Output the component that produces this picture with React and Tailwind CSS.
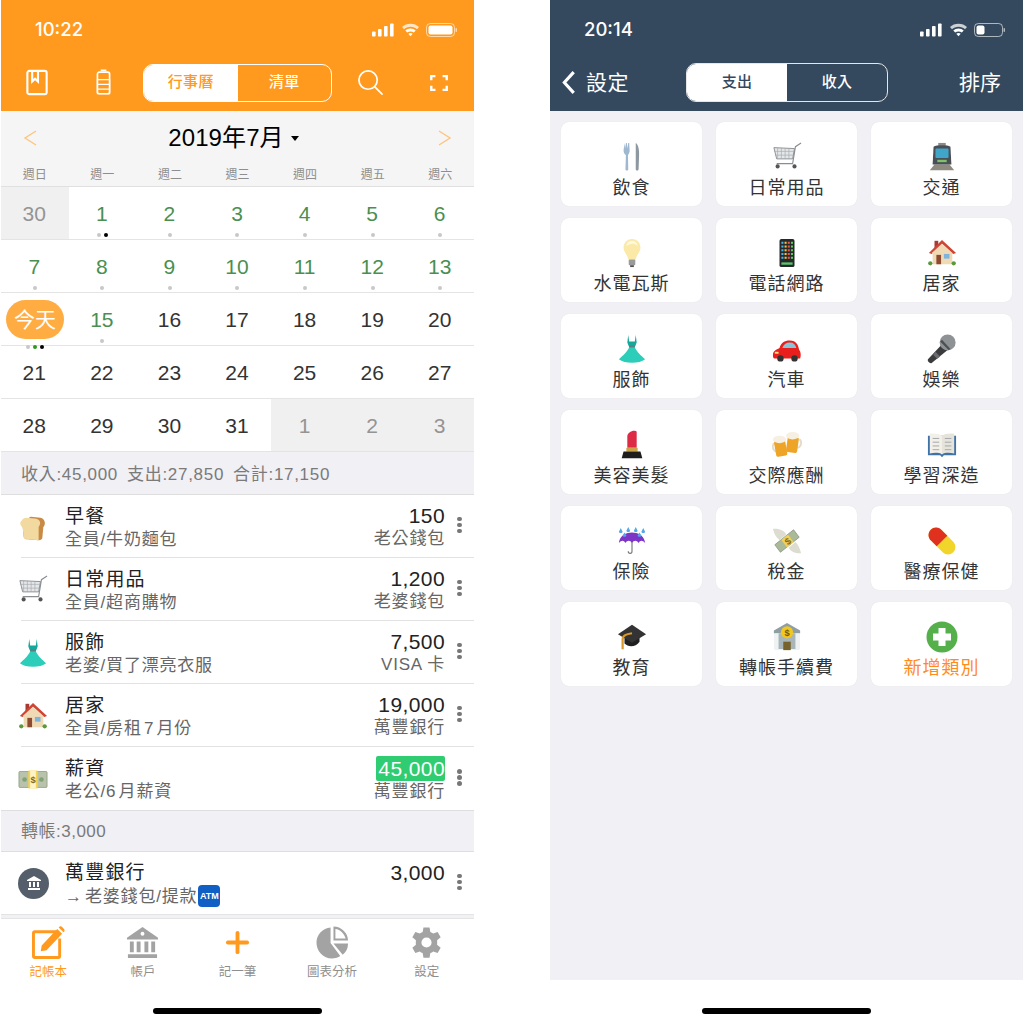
import { Plus } from 'lucide-react'

const FONT = "font-['Liberation_Sans','Noto_Sans_CJK_TC',sans-serif]"

// ---- emoji drawings, there is no emoji font in the sandbox
const Bread = () => (
  <svg viewBox="0 0 32 32" className="w-[30px] h-[30px]">
    <path d="M10 10 C4 9 3 14 5 16 L6 26 C6 28 8 29 10 29 L22 30 C25 30 26 29 26 27 L27 16 C30 13 29 7 24 6 L14 5 C12 5 11 7 10 10Z" fill="#c98a45" />
    <path d="M4 9 C1 12 3 15 5 16 L6 26 C6 28 8 29 11 29 L22 30 L22 16 C26 11 22 7 18 7 L9 6 C7 6 5 7 4 9Z" fill="#f2d9a0" />
  </svg>
)
const Cart = ({ size = 'w-[30px] h-[30px]' }) => (
  <svg viewBox="0 0 32 32" className={size} fill="none">
    <path d="M2 6 L24 7 L22 18 L5 18Z" fill="#e4e6e8" stroke="#8a8e92" strokeWidth="1" />
    <path d="M6 6 V18 M10 6 V18 M14 7 V18 M18 7 V18 M2 10 H24 M3 14 H23" stroke="#a6aaae" strokeWidth="0.7" />
    <path d="M31 1 L25 5 L22 23 H5" stroke="#8a8e92" strokeWidth="1.2" />
    <circle cx="6" cy="26" r="2.2" fill="#555" />
    <circle cx="24" cy="26" r="2.2" fill="#555" />
  </svg>
)
const Dress = () => (
  <svg viewBox="0 0 32 32" className="w-[30px] h-[30px]">
    <path d="M12 1 L13 8 H19 L20 1 L21 9 L19 14 H13 L11 9Z" fill="#16a89a" />
    <path d="M13 14 H19 C21 19 26 23 30 27 C24 32 8 32 2 27 C6 23 11 19 13 14Z" fill="#2ccdb9" />
    <rect x="13" y="12.5" width="6" height="2" fill="#5e7d80" />
  </svg>
)
const House = () => (
  <svg viewBox="0 0 32 32" className="w-[30px] h-[30px]">
    <rect x="8" y="3" width="4" height="8" fill="#a83a32" />
    <rect x="6" y="14" width="21" height="14" fill="#f0d9b5" />
    <path d="M16 2 L31 16 L28 17 L16 6 L5 17 L2 16Z" fill="#cf4535" />
    <path d="M16 6 L27 16 H5Z" fill="#f0d9b5" />
    <rect x="10" y="18" width="5" height="10" fill="#8c4a30" />
    <rect x="18" y="17" width="6" height="5" fill="#7fb5dc" />
    <circle cx="3.5" cy="27" r="2.3" fill="#5b9a3c" />
    <circle cx="28.5" cy="27" r="2.3" fill="#5b9a3c" />
  </svg>
)
const Money = () => (
  <svg viewBox="0 0 32 32" className="w-[30px] h-[30px]">
    <rect x="1" y="8" width="30" height="17" rx="1" fill="#b9c2aa" stroke="#8c9880" strokeWidth="0.8" />
    <circle cx="7" cy="16.5" r="2.5" fill="#83a176" />
    <circle cx="25" cy="16.5" r="2.5" fill="#83a176" />
    <rect x="11" y="7" width="10" height="19" fill="#f6d34f" />
    <rect x="13" y="7" width="6" height="19" fill="#fdf3c8" />
    <text x="16" y="20" textAnchor="middle" fontSize="10" fontWeight="700" fill="#7b6a2a" fontFamily="Liberation Sans">$</text>
  </svg>
)
const Cutlery = () => (
  <svg viewBox="0 0 32 32" className="w-[30px] h-[30px]">
    <path d="M8 1 L8.6 7 L9.6 1 L10.5 1 L11 7 L12 1 L13 1 L13.5 9 C13.5 12 12 13 11.7 14 L12 29 C12 31 9 31 9 29 L9.5 14 C8.5 13 7 12 7 9Z" fill="#9fb8cf" />
    <path d="M20 1 C23 3 24 9 23.5 16 L23 29 C23 31 20 31 20 29Z" fill="#8d98a0" />
  </svg>
)
const Train = () => (
  <svg viewBox="0 0 32 32" className="w-[30px] h-[30px]">
    <path d="M3 30 L8 24 H24 L29 30Z" fill="#8e8a80" />
    <rect x="12" y="1" width="8" height="3" fill="#8a8a8a" />
    <path d="M7 5 C10 3 22 3 25 5 L26 24 H6Z" fill="#4a4f55" />
    <rect x="9" y="7" width="14" height="10" rx="1" fill="#3fa6c9" />
    <rect x="11" y="19" width="10" height="2.5" fill="#7dc26a" />
  </svg>
)
const Bulb = () => (
  <svg viewBox="0 0 32 32" className="w-[30px] h-[30px]">
    <path d="M16 1 C9 1 7 7 7 10 C7 15 11 17 12 23 H20 C21 17 25 15 25 10 C25 7 23 1 16 1Z" fill="#fbe9a8" />
    <path d="M16 3 C12 3 10 6 10 9 C14 5 20 5 22 9 C22 6 20 3 16 3Z" fill="#fff8dc" />
    <rect x="12.5" y="23" width="7" height="6" rx="1" fill="#9a9a9a" />
    <rect x="14" y="29" width="4" height="2" fill="#555" />
  </svg>
)
const Phone = () => (
  <svg viewBox="0 0 32 32" className="w-[30px] h-[30px]">
    <rect x="8" y="1" width="16" height="30" rx="2" fill="#26282b" />
    {[4, 8, 12, 16, 20].map((y) =>
      [10, 13.4, 16.8, 20.2].map((x, i) => (
        <rect key={`${x}-${y}`} x={x} y={y} width="2.2" height="2.2" fill={['#3fb5e8', '#f2c33c', '#e8574f', '#5fc95a'][(i + y) % 4]} />
      ))
    )}
    <rect x="10" y="26" width="12" height="2.5" fill="#59c46a" />
  </svg>
)
const Car = () => (
  <svg viewBox="0 0 32 32" className="w-[30px] h-[30px]">
    <path d="M1 22 C1 18 6 16 8 15 C10 9 13 7 19 7 C26 7 28 12 29 17 C31 19 31 24 30 26 H3 C1 26 1 24 1 22Z" fill="#e81f1c" />
    <path d="M11 15 C12 11 15 9 19 9 C23 9 25 11 26 15Z" fill="#86c5da" />
    <circle cx="9" cy="26" r="3.4" fill="#333" />
    <circle cx="24" cy="26" r="3.4" fill="#333" />
    <rect x="3" y="19" width="4" height="2" fill="#fbe27a" />
  </svg>
)
const Mic = () => (
  <svg viewBox="0 0 32 32" className="w-[30px] h-[30px]">
    <path d="M16 11 L22 17 L5 31 C3 32 0 29 1 27Z" fill="#3b3b3d" />
    <path d="M9 19 L14 24 L11 26.500 L6.500 22Z" fill="#6a6c70" />
    <circle cx="22" cy="9" r="8.500" fill="#8f9295" />
    <path d="M14 8 L23 17 L25 16 L16 6Z" fill="#4d4f52" />
  </svg>
)
const Lipstick = () => (
  <svg viewBox="0 0 32 32" className="w-[30px] h-[30px]">
    <path d="M11 19 V7 C11 3 16 0 20 1 C21 1 21 2 21 3 V19Z" fill="#dd2b46" />
    <rect x="10" y="19" width="12" height="4" fill="#c9a24a" />
    <path d="M7 23 H25 L27 30 H5Z" fill="#1d1d1d" />
  </svg>
)
const Beer = () => (
  <svg viewBox="0 0 32 32" className="w-[30px] h-[30px]">
    <path d="M3 14 C0 15 0 22 5 23 M29 10 C32 11 32 18 27 19" stroke="#e4dccb" strokeWidth="2" fill="none" />
    <rect x="3" y="11" width="12" height="17" rx="2" transform="rotate(-10 9 18)" fill="#eea527" />
    <rect x="16" y="7" width="12" height="17" rx="2" transform="rotate(8 22 14)" fill="#eea527" />
    <ellipse cx="8" cy="10" rx="7" ry="4" fill="#f6efe2" />
    <ellipse cx="22" cy="6" rx="7" ry="4" fill="#f6efe2" />
  </svg>
)
const Book = () => (
  <svg viewBox="0 0 32 32" className="w-[30px] h-[30px]">
    <path d="M1 6 H31 V27 H18 L16 29 L14 27 H1Z" fill="#3f73a8" />
    <path d="M3 4 C8 3 13 4 16 6 V26 C13 24 8 24 3 25Z" fill="#f2f0e8" />
    <path d="M29 4 C24 3 19 4 16 6 V26 C19 24 24 24 29 25Z" fill="#e6e4da" />
    <path d="M6 9 H13 M6 13 H13 M6 17 H13 M6 21 H13 M19 9 H26 M19 13 H26 M19 17 H26 M19 21 H26" stroke="#a0a4a8" strokeWidth="1" />
  </svg>
)
const Umbrella = () => (
  <svg viewBox="0 0 32 32" className="w-[30px] h-[30px]">
    <path d="M2 18 C3 10 10 7 16 7 C22 7 29 10 30 18 C27 15 25 15 23 18 C21 15 18 15 16 18 C14 15 11 15 9 18 C7 15 5 15 2 18Z" fill="#7d35c8" />
    <path d="M16 17 V27 C16 30 12 30 12 27" stroke="#777" strokeWidth="1.2" fill="none" />
    <path d="M4 2 L6 6 C6 8 2 8 2 6Z M12 1 L14 5 C14 7 10 7 10 5Z M20 1 L22 5 C22 7 18 7 18 5Z M28 2 L30 6 C30 8 26 8 26 6Z M8 7 L10 10 C10 12 6 12 6 10Z M24 7 L26 10 C26 12 22 12 22 10Z" fill="#52a9e6" />
  </svg>
)
const FlyingMoney = () => (
  <svg viewBox="0 0 32 32" className="w-[30px] h-[30px]">
    <path d="M1 3 C7 2 14 5 15 9 L8 15 C4 12 2 8 1 3Z M31 29 C25 30 19 27 18 23 L25 17 C28 20 30 24 31 29Z" fill="#dcdcd0" />
    <path d="M3 20 L23 4 L29 12 L9 28Z" fill="#aab998" stroke="#84907a" strokeWidth="0.8" />
    <path d="M10 15 L17 9 L23 17 L16 23Z" fill="#f2cf58" />
    <text x="16.5" y="20" textAnchor="middle" fontSize="10" fontWeight="700" fill="#7b6a2a" fontFamily="Liberation Sans" transform="rotate(-40 16.5 16)">$</text>
  </svg>
)
const Pill = () => (
  <svg viewBox="0 0 32 32" className="w-[30px] h-[30px]">
    <g transform="rotate(45 16 16)">
      <rect x="-1" y="8" width="34" height="16" rx="8" fill="#f2d52a" />
      <path d="M16 8 H7 C2.5 8 -1 11.5 -1 16 C-1 20.500 2.5 24 7 24 H16Z" fill="#e0301e" />
    </g>
  </svg>
)
const GradCap = () => (
  <svg viewBox="0 0 32 32" className="w-[30px] h-[30px]">
    <path d="M8 16 V23 C12 27 20 27 24 21 V16Z" fill="#1f1f1f" />
    <path d="M16 3 L31 13 L16 22 L1 13Z" fill="#333" />
    <path d="M16 12 C10 13 6 14 6 19 V29" stroke="#d99a2b" strokeWidth="2.4" fill="none" />
  </svg>
)
const BankEmoji = () => (
  <svg viewBox="0 0 32 32" className="w-[30px] h-[30px]">
    <path d="M16 1 L30 9 V12 H2 V9Z" fill="#8f9ea2" />
    <rect x="3" y="12" width="26" height="17" fill="#a9b6b9" />
    <rect x="3" y="12" width="4" height="18" fill="#eef2f2" />
    <rect x="25" y="12" width="4" height="18" fill="#eef2f2" />
    <rect x="12" y="21" width="8" height="9" fill="#76632a" />
    <circle cx="16" cy="11" r="6.500" fill="#f2c81f" />
    <text x="16" y="15" textAnchor="middle" fontSize="10" fontWeight="700" fill="#6b5a10" fontFamily="Liberation Sans">$</text>
  </svg>
)
const AddGreen = () => (
  <svg viewBox="0 0 32 32" className="w-[32px] h-[32px]">
    <circle cx="16" cy="16" r="15.500" fill="#55b04c" />
    <path d="M12.500 7 H19.500 V12.500 H25 V19.500 H19.500 V25 H12.500 V19.500 H7 V12.500 H12.500Z" fill="#fff" />
  </svg>
)

// ---- status bar and toolbar glyphs
const StatusIcons = ({ full }) => (
  <svg viewBox="0 0 85 16" className="w-[85px] h-[16px]" fill="#fff">
    <rect x="0" y="9.500" width="3.600" height="5" rx="0.8" />
    <rect x="6" y="7" width="3.600" height="7.500" rx="0.8" />
    <rect x="12" y="4" width="3.600" height="10.500" rx="0.8" />
    <rect x="18" y="1.500" width="3.600" height="13" rx="0.8" />
    <path d="M30 5 C34 0.500 43 0.500 47 5 L45 7.200 C42 3.800 35 3.800 32 7.200Z" opacity="0.75" />
    <path d="M33.300 8.500 C36 5.800 41 5.800 43.700 8.500 L41.800 10.500 C40 9 37 9 35.200 10.500Z" />
    <path d="M36.300 11.700 C37.500 10.700 39.500 10.700 40.700 11.700 L38.500 14.200Z" />
    <rect x="54.500" y="1.500" width="28" height="13" rx="3.800" fill="none" stroke="#fff" strokeOpacity="0.6" />
    <rect x="56.500" y="3.500" width={full ? 24 : 8} height="9" rx="2" />
    <rect x="83.500" y="6" width="1.500" height="4" rx="0.7" opacity="0.6" />
  </svg>
)

const Dots = ({ colors }) => (
  <div className="flex justify-center gap-[3px] h-[4px] mt-[5px]">
    {colors.map((c, i) => (
      <span key={i} className={`w-[4px] h-[4px] rounded-full ${c}`} />
    ))}
  </div>
)

const gray = 'bg-[#c8c8c8]'
const weeks = [
  [['30', 'o', []], ['1', 'g', [gray, 'bg-black']], ['2', 'g', [gray]], ['3', 'g', [gray]], ['4', 'g', [gray]], ['5', 'g', [gray]], ['6', 'g', [gray]]],
  [['7', 'g', [gray]], ['8', 'g', [gray]], ['9', 'g', [gray]], ['10', 'g', [gray]], ['11', 'g', [gray]], ['12', 'g', [gray]], ['13', 'g', [gray]]],
  [['今天', 't', [gray, 'bg-[#2c9a1a]', 'bg-black']], ['15', 'g', [gray]], ['16', 'n', []], ['17', 'n', []], ['18', 'n', []], ['19', 'n', []], ['20', 'n', []]],
  [['21', 'n', []], ['22', 'n', []], ['23', 'n', []], ['24', 'n', []], ['25', 'n', []], ['26', 'n', []], ['27', 'n', []]],
  [['28', 'n', []], ['29', 'n', []], ['30', 'n', []], ['31', 'n', []], ['1', 'o', []], ['2', 'o', []], ['3', 'o', []]],
]

const DayCell = ({ day }) => {
  const [label, kind, dots] = day
  if (kind === 't') {
    return (
      <div className="relative flex flex-col items-center justify-center">
        <div className="absolute top-[7px] left-[5px] w-[58px] h-[39px] rounded-[20px] bg-[#ffad42] text-white text-[21px] flex items-center justify-center">{label}</div>
        <div className="absolute top-[47px] left-0 right-0"><Dots colors={dots} /></div>
      </div>
    )
  }
  const color = kind === 'g' ? 'text-[#4a8f50]' : kind === 'o' ? 'text-[#949494]' : 'text-[#333]'
  return (
    <div className={`relative flex items-center justify-center pt-[2px] pr-[1px] text-[21px] ${color} ${kind === 'o' ? 'bg-[#f0f0f0]' : ''}`}>
      {label}
      {dots.length > 0 && <div className="absolute top-[41px] left-0 right-0"><Dots colors={dots} /></div>}
    </div>
  )
}

const records = [
  { icon: <Bread />, title: '早餐', sub: '全員/牛奶麵包', amount: '150', account: '老公錢包' },
  { icon: <Cart />, title: '日常用品', sub: '全員/超商購物', amount: '1,200', account: '老婆錢包' },
  { icon: <Dress />, title: '服飾', sub: '老婆/買了漂亮衣服', amount: '7,500', account: 'VISA\u2009卡' },
  { icon: <House />, title: '居家', sub: '全員/房租\u200a7\u200a月份', amount: '19,000', account: '萬豐銀行' },
  { icon: <Money />, title: '薪資', sub: '老公/6\u200a月薪資', amount: '45,000', account: '萬豐銀行', income: true },
]

const More = () => (
  <div className="w-[29px] shrink-0 flex flex-col items-center gap-[1.500px] pb-[2px]">
    <span className="w-[4.500px] h-[4.500px] rounded-full bg-[#777]" />
    <span className="w-[4.500px] h-[4.500px] rounded-full bg-[#777]" />
    <span className="w-[4.500px] h-[4.500px] rounded-full bg-[#777]" />
  </div>
)

const RecordRow = ({ r, last }) => (
  <div className="flex items-center h-[63px]">
    <div className="w-[65px] shrink-0 pl-[17px]">{r.icon}</div>
    <div className={`flex-1 h-full flex items-center ${last ? '' : 'border-b border-[#e2e2e2]'} -ml-[45px] pl-[44px]`}>
      <div className="flex-1 flex flex-col pt-[1px]">
        <span className="text-[19px] leading-[25px] tracking-[1.200px] text-[#222]">{r.title}</span>
        <span className="text-[17px] leading-[21px] tracking-[0.800px] text-[#666]">{r.sub}</span>
      </div>
      <div className="flex flex-col items-end">
        <span className={`text-[21px] leading-[25px] tracking-[0.400px] ${r.income ? 'bg-[#2fcc71] text-white rounded-[2px] pl-[2px]' : 'text-[#222]'}`}>{r.amount}</span>
        <span className="text-[17px] leading-[21px] tracking-[0.800px] text-[#666]">{r.account}</span>
      </div>
      <More />
    </div>
  </div>
)

const TabItem = ({ icon, label, active }) => (
  <div className="flex-1 flex flex-col items-center">
    <div className="h-[33px] flex items-center justify-center">{icon}</div>
    <span className={`mt-[5px] text-[12.500px] leading-[16px] ${active ? 'text-[#ff9a1f]' : 'text-[#8e8e8e]'}`}>{label}</span>
  </div>
)

const HomeBar = () => <div className="w-[169px] h-[6px] rounded-full bg-black" />

const LeftPhone = () => (
  <div className="w-[473px] h-[1024px] flex flex-col bg-white ml-[1px] shrink-0">
    <div className="h-[111px] bg-[#ff9a1f] flex flex-col">
      <div className="h-[56px] flex items-center justify-between pl-[34px] pr-[17px] pt-[3px]">
        <span className="text-white text-[18.500px] font-medium font-['Inter',sans-serif]">10:22</span>
        <StatusIcons full />
      </div>
      <div className="flex items-center h-[55px] pb-[2px]">
        <div className="w-[72px] flex justify-center">
          <svg viewBox="0 0 24 28" className="w-[24px] h-[27px]" fill="none" stroke="#fff" strokeWidth="2.200">
            <rect x="2" y="2" width="20" height="24" rx="2" />
            <path d="M7 2 V13 L10 10 L13 13 V2" />
          </svg>
        </div>
        <div className="w-[60px] flex justify-center">
          <svg viewBox="0 0 16 28" className="w-[15px] h-[27px]" fill="none" stroke="#fff" strokeWidth="1.800">
            <rect x="1.500" y="3" width="13" height="23" rx="2" />
            <path d="M5 1 H11" />
            <path d="M1.500 11 H14.500 V26 H1.500Z M1.500 16 H14.500 M1.500 21 H14.500" strokeWidth="1.300" />
          </svg>
        </div>
        <div className="ml-[10px] w-[189px] h-[38px] rounded-[10px] border border-white flex overflow-hidden">
          <div className="w-1/2 bg-white text-[#ff9a1f] text-[15px] font-medium tracking-[0.3px] flex items-center justify-center">行事曆</div>
          <div className="w-1/2 text-white text-[15px] font-medium tracking-[0.3px] flex items-center justify-center">清單</div>
        </div>
        <div className="w-[76px] flex justify-center">
          <svg viewBox="0 0 28 28" className="w-[27px] h-[27px]" fill="none" stroke="#fff" strokeWidth="1.800" strokeLinecap="round">
            <circle cx="11.500" cy="11.500" r="9.500" />
            <path d="M18.500 18.500 L26 26" />
          </svg>
        </div>
        <div className="flex-1 flex justify-center pr-[5px]">
          <svg viewBox="0 0 20 18" className="w-[18px] h-[16px]" fill="none" stroke="#fff" strokeWidth="2.700">
            <path d="M1.300 6 V1.300 H6 M14 1.300 H18.700 V6 M18.700 12 V16.700 H14 M6 16.700 H1.300 V12" />
          </svg>
        </div>
      </div>
    </div>

    <div className="h-[76px] bg-[#f5f5f5] border-b border-[#e0e0e0] flex flex-col">
      <div className="h-[54px] flex items-center justify-between px-[23px]">
        <svg viewBox="0 0 14 18" className="w-[14px] h-[18px] -ml-[1px]" fill="none" stroke="#ffc27a" strokeWidth="1.300"><path d="M13 2 L2 9 L13 16" /></svg>
        <div className="flex items-center gap-[7px] pr-[8px] text-[24px] tracking-[0.100px] text-black">
          <span>2019年7月</span>
          <span className="w-0 h-0 border-x-[4.500px] border-x-transparent border-t-[5px] border-t-black" />
        </div>
        <svg viewBox="0 0 14 18" className="w-[14px] h-[18px] -mr-[1px]" fill="none" stroke="#ffc27a" strokeWidth="1.300"><path d="M1 2 L12 9 L1 16" /></svg>
      </div>
      <div className="grid grid-cols-7 text-center text-[12px] text-[#8e8e8e] leading-[20px]">
        {['週日', '週一', '週二', '週三', '週四', '週五', '週六'].map((d) => <span key={d}>{d}</span>)}
      </div>
    </div>

    {weeks.map((w, i) => (
      <div key={i} className="grid grid-cols-7 h-[53px] border-b border-[#e4e4e4]">
        {w.map((d, j) => <DayCell key={j} day={d} />)}
      </div>
    ))}

    <div className="h-[43px] bg-[#f0f0f5] border-b border-[#dedede] flex items-center pl-[20px] pt-[3px] text-[17px] tracking-[0.700px] text-[#7a7a7a] gap-[9px]">
      <span>收入:45,000</span><span>支出:27,850</span><span>合計:17,150</span>
    </div>

    {records.map((r, i) => <RecordRow key={r.title} r={r} last={i === records.length - 1} />)}

    <div className="h-[42px] bg-[#f0f0f5] border-y border-[#dedede] flex items-center pl-[20px] pt-[2px] text-[17px] tracking-[0.500px] text-[#7a7a7a]">轉帳:3,000</div>

    <div className="flex items-center h-[62px]">
      <div className="w-[64px] shrink-0 pl-[17px]">
        <div className="w-[31px] h-[31px] rounded-full bg-[#545f6b] flex items-center justify-center">
          <svg viewBox="0 0 16 16" className="w-[16px] h-[16px]" fill="#fff">
            <path d="M8 1 L15 5 V6 H1 V5Z M2 13 H14 V15 H2Z M3 7 H5 V12 H3Z M7 7 H9 V12 H7Z M11 7 H13 V12 H11Z" />
          </svg>
        </div>
      </div>
      <div className="flex-1 flex flex-col pt-[1px]">
        <span className="text-[19px] leading-[25px] tracking-[1.200px] text-[#222]">萬豐銀行</span>
        <span className="flex items-center text-[17px] leading-[21px] tracking-[0.800px] text-[#666]">
          <span className="w-[20px] shrink-0">→</span>老婆錢包/提款
          <span className="ml-[1px] w-[22px] h-[22px] rounded-[4px] bg-[#0f5fc4] text-white text-[9px] font-bold tracking-normal flex items-center justify-center">ATM</span>
        </span>
      </div>
      <div className="self-start pt-[8px] text-[21px] leading-[25px] tracking-[0.400px] text-[#222]">3,000</div>
      <More />
    </div>

    <div className="h-[5px] bg-[#f0f0f5] border-y border-[#e4e4e4]" />

    <div className="flex-1 flex flex-col items-center">
      <div className="w-full flex pt-[7px]">
        <TabItem
          active
          label="記帳本"
          icon={
            <svg viewBox="0 0 34 34" className="w-[33px] h-[33px]">
              <path d="M25 6 H3 C2 6 1.500 6.500 1.500 7.500 V31 C1.500 32 2 32.500 3 32.500 H27 C28 32.500 28.500 32 28.500 31 V13" fill="none" stroke="#ff9a1f" strokeWidth="3" />
              <path d="M10 20 L26 3 L31 8 L15 25 L9 26Z M27.500 1.500 C29 0 30 0 31.500 1.500 L32.500 2.500 C34 4 34 5 32.500 6.500Z" fill="#ff9a1f" />
            </svg>
          }
        />
        <TabItem
          label="帳戶"
          icon={
            <svg viewBox="0 0 34 34" className="w-[33px] h-[33px]" fill="#a3a3a3">
              <path d="M17 1 L33 12 V14 H1 V12Z" />
              <circle cx="17" cy="8" r="2" fill="#fff" />
              <path d="M4 16 H8 V27 H4Z M11 16 H15 V27 H11Z M19 16 H23 V27 H19Z M26 16 H30 V27 H26Z M2 29 H32 V33 H2Z" />
            </svg>
          }
        />
        <TabItem
          label="記一筆"
          icon={<Plus className="w-[33px] h-[33px] text-[#ff9a1f]" strokeWidth={2.800} absoluteStrokeWidth />}
        />
        <TabItem
          label="圖表分析"
          icon={
            <svg viewBox="0 0 34 34" className="w-[33px] h-[33px]" fill="#a3a3a3">
              <path d="M15 1.500 V17.500 L25 31 C22 33 19 33.500 16.500 33.500 C7.500 33.500 0.500 26 0.500 17 C0.500 9 7 2 15 1.500Z" />
              <path d="M18 0.500 C26 0.500 33 7 33 15 H18Z M20 3 V13 H30.500 C29.500 8 25 3.500 20 3Z" fillRule="evenodd" />
              <path d="M18 18 H33 C33 23 31 27 27.500 29.500Z" />
            </svg>
          }
        />
        <TabItem
          label="設定"
          icon={
            <svg viewBox="0 0 24 24" className="w-[33px] h-[33px]" fill="#a3a3a3">
              <path fillRule="evenodd" d="M14.200 1 L14.800 4.300 C15.600 4.600 16.300 5 16.900 5.500 L20.100 4.400 L22.300 8.200 L19.700 10.400 C19.800 11.200 19.800 12.800 19.700 13.600 L22.300 15.800 L20.100 19.600 L16.900 18.500 C16.300 19 15.600 19.400 14.800 19.700 L14.200 23 H9.800 L9.200 19.700 C8.400 19.400 7.700 19 7.100 18.500 L3.900 19.600 L1.700 15.800 L4.300 13.600 C4.200 12.800 4.200 11.200 4.300 10.400 L1.700 8.200 L3.900 4.400 L7.100 5.500 C7.700 5 8.400 4.600 9.200 4.300 L9.800 1Z M12 8.300 A3.700 3.700 0 1 0 12 15.700 A3.700 3.700 0 1 0 12 8.300Z" />
            </svg>
          }
        />
      </div>
      <div className="mt-auto mb-[10px]"><HomeBar /></div>
    </div>
  </div>
)

const categories = [
  [<Cutlery />, '飲食'], [<Cart />, '日常用品'], [<Train />, '交通'],
  [<Bulb />, '水電瓦斯'], [<Phone />, '電話網路'], [<House />, '居家'],
  [<Dress />, '服飾'], [<Car />, '汽車'], [<Mic />, '娛樂'],
  [<Lipstick />, '美容美髮'], [<Beer />, '交際應酬'], [<Book />, '學習深造'],
  [<Umbrella />, '保險'], [<FlyingMoney />, '稅金'], [<Pill />, '醫療保健'],
  [<GradCap />, '教育'], [<BankEmoji />, '轉帳手續費'], [<AddGreen />, '新增類別'],
]

const RightPhone = () => (
  <div className="w-[473px] h-[1024px] flex flex-col bg-white shrink-0">
    <div className="h-[111px] bg-[#35495e] flex flex-col">
      <div className="h-[56px] flex items-center justify-between pl-[34px] pr-[18px] pt-[3px]">
        <span className="text-white text-[18.500px] font-medium font-['Inter',sans-serif]">20:14</span>
        <StatusIcons />
      </div>
      <div className="flex items-center h-[55px] pb-[2px]">
        <div className="w-[136px] flex items-center pl-[11px] text-white text-[21px] tracking-[0.500px]">
          <svg viewBox="0 0 14 24" className="w-[15px] h-[25px] mr-[10px]" fill="none" stroke="#fff" strokeWidth="3"><path d="M12 2 L3 12 L12 22" /></svg>
          設定
        </div>
        <div className="w-[202px] h-[39px] rounded-[10px] border border-[#e6e6e6] flex overflow-hidden">
          <div className="w-1/2 bg-white text-[#35495e] text-[15px] font-medium tracking-[0.3px] flex items-center justify-center">支出</div>
          <div className="w-1/2 text-white text-[15px] font-medium tracking-[0.3px] flex items-center justify-center">收入</div>
        </div>
        <div className="flex-1 text-right pr-[22px] text-white text-[21px]">排序</div>
      </div>
    </div>
    <div className="h-[869px] bg-[#f0f0f5] px-[11px] pt-[11px]">
      <div className="grid grid-cols-3 gap-x-[14px] gap-y-[12px]">
        {categories.map(([icon, label]) => (
          <div key={label} className="h-[84px] bg-white rounded-[8px] shadow-[0_0_1px_rgba(0,0,0,0.1)] flex flex-col items-center pt-[19px]">
            <div className="h-[32px] flex items-center justify-center">{icon}</div>
            <span className={`text-[18px] leading-[24px] tracking-[1px] mt-[3px] ${label === '新增類別' ? 'text-[#ff8c1a]' : 'text-[#333]'}`}>{label}</span>
          </div>
        ))}
      </div>
    </div>
    <div className="flex-1 flex justify-center items-end pb-[10px]"><HomeBar /></div>
  </div>
)

export default function App() {
  return (
    <div className={`w-[1024px] h-[1024px] flex gap-[76px] bg-white overflow-hidden ${FONT}`}>
      <LeftPhone />
      <RightPhone />
    </div>
  )
}
